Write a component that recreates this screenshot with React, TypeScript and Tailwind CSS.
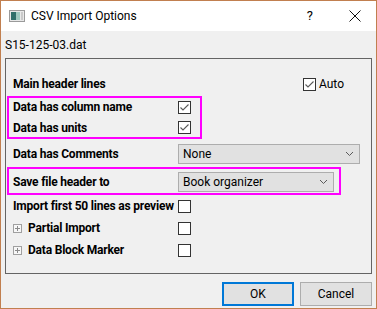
import React from "react";

const font = { fontFamily: 'Roboto, "Noto Sans", sans-serif' };

function Check({ checked }: { checked?: boolean }) {
  return (
    <div className="w-[13px] h-[13px] border border-[#333333] bg-white flex items-center justify-center shrink-0">
      {checked && (
        <svg width="11" height="11" viewBox="0 0 11 11">
          <path d="M1.5 5.5 L4 8 L9.5 2.5" fill="none" stroke="#5a5a5a" strokeWidth="1.1" />
        </svg>
      )}
    </div>
  );
}

function Chevron() {
  return (
    <svg width="9" height="6" viewBox="0 0 9 6">
      <path d="M1 1 L4.5 4.5 L8 1" fill="none" stroke="#5a5a5a" strokeWidth="1" />
    </svg>
  );
}

function Select({ label, w }: { label: string; w: string }) {
  return (
    <div className={`${w} h-[20px] border border-[#adadad] bg-[#e1e1e1] flex items-center justify-between pl-[4px] pr-[5px] text-[12px] text-black whitespace-nowrap`}>
      <span>{label}</span>
      <Chevron />
    </div>
  );
}

function Expander() {
  return (
    <svg width="9" height="9" viewBox="0 0 9 9" className="mr-[6px] shrink-0">
      <rect x="0.5" y="0.5" width="8" height="8" fill="#f7f7f7" stroke="#a0a0a0" />
      <path d="M2 4.5 H7 M4.5 2 V7" stroke="#8a8a8a" strokeWidth="1" />
    </svg>
  );
}

const lbl = "font-bold tracking-[-0.2px]";

export default function App() {
  return (
    <div style={font} className="w-[377px] h-[309px] border border-[#c17f4f] bg-[#f0f0f0] flex flex-col text-black whitespace-nowrap">
      {/* Title bar */}
      <div className="h-[30px] bg-white flex items-center shrink-0">
        <svg width="16" height="12" viewBox="0 0 16 12" className="ml-[8px] mr-[6px]">
          <rect x="0.5" y="0.5" width="15" height="11" fill="#e8e8e8" stroke="#9a9a9a" />
          <rect x="2" y="2" width="5" height="8" fill="#2f6f6a" />
          <rect x="7" y="2" width="4" height="8" fill="#9fc9c0" />
          <rect x="12" y="2" width="2" height="8" fill="#c9c9c9" />
        </svg>
        <span className="text-[12px]">CSV Import Options</span>
        <span className="ml-auto text-[13px] mr-[36px]">?</span>
        <svg width="12" height="12" viewBox="0 0 12 12" className="mr-[15px]">
          <path d="M0.5 0.5 L11.5 11.5 M11.5 0.5 L0.5 11.5" stroke="#111" strokeWidth="1" />
        </svg>
      </div>
      {/* File name */}
      <div className="h-[27px] flex items-center pl-[4px] text-[12px] shrink-0">S15-125-03.dat</div>
      {/* Panel */}
      <div className="mx-[4px] h-[216px] border border-[#646464] flex flex-col text-[12px] shrink-0">
        <div className="mt-[14px] h-[22px] flex items-center pl-[7px]">
          <span className={lbl}>Main header lines</span>
          <div className="ml-auto mr-[27px] flex items-center">
            <Check checked />
            <span className="ml-[3px]">Auto</span>
          </div>
        </div>
        <div className="ml-[1px] mt-[1px] w-[195px] h-[43px] border-2 border-[#ff00ff] flex flex-col">
          <div className="h-[20px] flex items-center pl-[4px]">
            <span className={`${lbl} w-[165px]`}>Data has column name</span>
            <Check checked />
          </div>
          <div className="mt-[2px] h-[20px] flex items-center pl-[4px]">
            <span className={`${lbl} w-[165px]`}>Data has units</span>
            <Check checked />
          </div>
        </div>
        <div className="mt-[5px] h-[20px] flex items-center pl-[7px]">
          <span className={`${lbl} w-[165px]`}>Data has Comments</span>
          <Select label="None" w="w-[182px]" />
        </div>
        <div className="ml-[1px] mt-[3px] w-[334px] h-[28px] border-2 border-[#ff00ff] pt-[3px]">
          <div className="h-[20px] flex items-center pl-[4px]">
            <span className={`${lbl} w-[165px]`}>Save file header to</span>
            <Select label="Book organizer" w="w-[156px]" />
          </div>
        </div>
        <div className="mt-[1px] h-[20px] flex items-center pl-[7px]">
          <span className={`${lbl} w-[165px]`}>Import first 50 lines as preview</span>
          <Check />
        </div>
        <div className="mt-[2px] h-[20px] flex items-center pl-[7px]">
          <div className="w-[165px] flex items-center">
            <Expander />
            <span className={lbl}>Partial Import</span>
          </div>
          <Check />
        </div>
        <div className="mt-[2px] h-[20px] flex items-center pl-[7px]">
          <div className="w-[165px] flex items-center">
            <Expander />
            <span className={lbl}>Data Block Marker</span>
          </div>
          <Check />
        </div>
      </div>
      {/* Buttons */}
      <div className="mt-[8px] flex justify-end pr-[4px] gap-[6px]">
        <button className="w-[72px] h-[24px] border-2 border-[#0078d7] bg-[#e1e1e1] text-[12px] flex items-center justify-center">OK</button>
        <button className="w-[72px] h-[24px] border border-[#adadad] bg-[#e1e1e1] text-[12px] flex items-center justify-center">Cancel</button>
      </div>
    </div>
  );
}
